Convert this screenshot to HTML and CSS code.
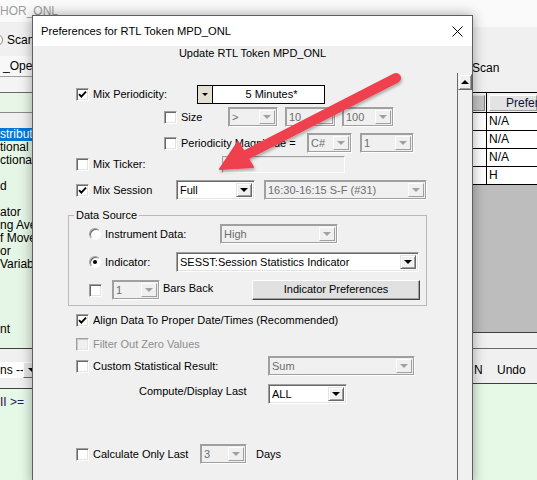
FILE: index.html
```html
<!DOCTYPE html>
<html>
<head>
<meta charset="utf-8">
<link rel="stylesheet" href="styles.css">
</head>
<body>
<div class="app">
  <div class="lp">
    <div class="lp-title">HOR_ONL</div>
    <div class="lp-tool"><span class="lp-radio"></span><span>Scan</span></div>
    <div class="lp-field">_Open_</div>
    <div class="lp-band1"></div>
    <div class="lp-band2"></div>
    <div class="lp-head"></div>
    <ul class="lp-list">
      <li class="sel">stributi</li>
      <li>tional In</li>
      <li>ctional</li>
      <li></li>
      <li>d</li>
      <li></li>
      <li>ator</li>
      <li>ng Ave</li>
      <li>f Mover</li>
      <li>or</li>
      <li>Variable</li>
      <li></li>
      <li></li>
      <li></li>
      <li></li>
      <li>nt</li>
    </ul>
    <div class="lp-bar"><div class="lp-combo"><span class="lp-ct">ns --</span><span class="lp-btn"><i class="tri"></i></span></div></div>
    <div class="lp-edit"><span class="kw">II</span> &gt;=</div>
  </div>
  <div class="rp">
    <div class="rp-top"></div>
    <div class="rp-tool">Scan</div>
    <div class="grid">
      <div class="g-row g-head"><div class="g-cell"><span class="hbtn dark"></span></div><div class="g-cell"><span class="hbtn">Prefere</span></div></div>
      <div class="g-row"><div class="g-cell"></div><div class="g-cell">N/A</div></div>
      <div class="g-row"><div class="g-cell"></div><div class="g-cell">N/A</div></div>
      <div class="g-row"><div class="g-cell"></div><div class="g-cell">N/A</div></div>
      <div class="g-row"><div class="g-cell"></div><div class="g-cell">H</div></div>
    </div>
    <div class="rp-gray"></div>
    <div class="rp-band"></div>
    <div class="rp-tool2"><span class="t-n">N</span><span>Undo</span></div>
    <div class="rp-green"></div>
  </div>
</div>

<div class="dlg">
  <div class="dlg-title">
    <span>Preferences for RTL Token MPD_ONL</span>
    <svg class="close" width="11" height="11" viewBox="0 0 11 11"><path d="M0.5 0.5 L10.5 10.5 M10.5 0.5 L0.5 10.5" stroke="#000" stroke-width="1" fill="none"/></svg>
  </div>
  <div class="dlg-sub">Update RTL Token MPD_ONL</div>
  <div class="dlg-panel">
    <div class="dlg-content">
      <div class="row r1 pl-main">
        <span class="cb"><svg width="9" height="9" viewBox="0 0 9 9"><path d="M1 4.2 L3.3 6.6 L8 1.6" stroke="#000" stroke-width="1.9" fill="none"/></svg></span>
        <span class="lbl w-period">Mix Periodicity:</span>
        <span class="pcombo"><span class="pbtn"><i class="tri sm"></i></span><span class="pfield">5 Minutes*</span></span>
      </div>
      <div class="row r2 pl-sub">
        <span class="cb"></span>
        <span class="lbl w-size">Size</span>
        <span class="combo dis c-gt"><span class="ct">&gt;</span><span class="cbtn"><i class="tri"></i></span></span>
        <span class="combo dis c-10"><span class="ct">10</span><span class="cbtn"><i class="tri"></i></span></span>
        <span class="combo dis c-100"><span class="ct">100</span><span class="cbtn"><i class="tri"></i></span></span>
      </div>
      <div class="row r3 pl-sub">
        <span class="cb"></span>
        <span class="lbl w-mag">Periodicity Magnitude =</span>
        <span class="combo dis c-cs"><span class="ct">C#</span><span class="cbtn"><i class="tri"></i></span></span>
        <span class="combo dis c-one"><span class="ct">1</span><span class="cbtn"><i class="tri"></i></span></span>
      </div>
      <div class="row r4 pl-main">
        <span class="cb"></span>
        <span class="lbl w-ticker">Mix Ticker:</span>
        <span class="tfield"></span>
      </div>
      <div class="row r5 pl-main">
        <span class="cb"><svg width="9" height="9" viewBox="0 0 9 9"><path d="M1 4.2 L3.3 6.6 L8 1.6" stroke="#000" stroke-width="1.9" fill="none"/></svg></span>
        <span class="lbl w-session">Mix Session</span>
        <span class="combo c-full"><span class="ct">Full</span><span class="cbtn"><i class="tri"></i></span></span>
        <span class="combo dis c-sess"><span class="ct">16:30-16:15 S-F (#31)</span><span class="cbtn"><i class="tri"></i></span></span>
      </div>
      <fieldset class="group">
        <legend>Data Source</legend>
        <div class="row f1">
          <span class="rb"></span>
          <span class="lbl w-inst">Instrument Data:</span>
          <span class="combo dis c-high"><span class="ct">High</span><span class="cbtn"><i class="tri"></i></span></span>
        </div>
        <div class="row f2">
          <span class="rb on"></span>
          <span class="lbl w-ind">Indicator:</span>
          <span class="combo c-sesst"><span class="ct">SESST:Session Statistics Indicator</span><span class="cbtn"><i class="tri"></i></span></span>
        </div>
        <div class="row f3">
          <span class="cb"></span>
          <span class="combo dis c-bars"><span class="ct">1</span><span class="cbtn"><i class="tri"></i></span></span>
          <span class="lbl w-bars raised">Bars Back</span>
          <span class="btn">Indicator Preferences</span>
        </div>
      </fieldset>
      <div class="row r6 pl-main">
        <span class="cb"><svg width="9" height="9" viewBox="0 0 9 9"><path d="M1 4.2 L3.3 6.6 L8 1.6" stroke="#000" stroke-width="1.9" fill="none"/></svg></span>
        <span class="lbl">Align Data To Proper Date/Times (Recommended)</span>
      </div>
      <div class="row r7 pl-main">
        <span class="cb dis"></span>
        <span class="lbl gray">Filter Out Zero Values</span>
      </div>
      <div class="row r8 pl-main">
        <span class="cb"></span>
        <span class="lbl w-custom">Custom Statistical Result:</span>
        <span class="combo dis c-sum"><span class="ct">Sum</span><span class="cbtn"><i class="tri"></i></span></span>
      </div>
      <div class="row r9 pl-compute">
        <span class="lbl w-compute raised2">Compute/Display Last</span>
        <span class="combo c-all"><span class="ct">ALL</span><span class="cbtn"><i class="tri"></i></span></span>
      </div>
      <div class="row r10 pl-main">
        <span class="cb"></span>
        <span class="lbl w-calc">Calculate Only Last</span>
        <span class="combo dis c-three"><span class="ct">3</span><span class="cbtn"><i class="tri"></i></span></span>
        <span class="lbl days">Days</span>
      </div>
    </div>
    <div class="vscroll"><div class="sb-btn"><i class="tri-up"></i></div></div>
  </div>
</div>

<svg class="callout" width="537" height="480" viewBox="0 0 537 480">
  <defs>
    <filter id="sh" x="-10%" y="-10%" width="130%" height="140%">
      <feDropShadow dx="1" dy="2" stdDeviation="1.5" flood-color="#000" flood-opacity="0.3"/>
    </filter>
  </defs>
  <g filter="url(#sh)" fill="#ee3f4e" stroke="#ee3f4e">
    <line x1="396" y1="78" x2="242" y2="157" stroke-width="10" stroke-linecap="round"/>
    <polygon points="220,169 238,142 253,167" stroke-width="2" stroke-linejoin="round"/>
  </g>
</svg>
</body>
</html>
```
FILE: styles.css
```css
* { box-sizing: border-box; margin: 0; padding: 0; }
html, body { width: 537px; height: 480px; overflow: hidden; }
body {
  position: relative;
  font-family: "Liberation Sans", Arial, sans-serif;
  font-size: 11px;
  color: #000;
  background: #f0f0f0;
}

/* ---------- background application ---------- */
.app { display: grid; grid-template-columns: 440px 97px; height: 480px; }
.lp { display: flex; flex-direction: column; overflow: hidden; font-size: 12px; }
.lp-title { height: 22px; flex: none; background: #fafafa; color: #9c9c9c; line-height: 22px; white-space: nowrap; }
.lp-tool { height: 34px; flex: none; background: #f0f0f0; display: flex; align-items: center; gap: 4px; padding-top: 2px; }
.lp-radio { width: 12px; height: 12px; margin-left: -9px; border-radius: 50%; background: #fff; border: 1px solid #8a8a8a; }
.lp-field { height: 21px; flex: none; background: #f8f8f8; border-bottom: 1px solid #a0a0a0; line-height: 20px; padding-left: 3px; }
.lp-band1 { height: 16px; flex: none; background: #f4f4f4; border-bottom: 1px solid #6a6a6a; }
.lp-band2 { height: 20px; flex: none; background: #e8f6e8; border-bottom: 1px solid #8a8a8a; }
.lp-head { height: 15px; flex: none; background: #f0f0f0; }
.lp-list { height: 221px; flex: none; list-style: none; background: #e6f6e6; border-bottom: 1px solid #404040; }
.lp-list li { height: 13px; line-height: 13px; white-space: nowrap; }
.lp-list li.sel { background: #0078d7; color: #fff; }
.lp-bar { height: 40px; flex: none; background: #f0f0f0; border-bottom: 1px solid #404040; padding-top: 13px; }
.lp-combo { display: flex; height: 16px; width: 40px; background: #fff; }
.lp-ct { width: 23px; line-height: 16px; white-space: nowrap; }
.lp-btn { width: 17px; background: #e6e6e6; border: 1px solid; border-color: #fff #696969 #696969 #fff; display: flex; align-items: center; justify-content: center; }
.lp-edit { flex: 1; background: #e6f8e6; padding-top: 6px; line-height: 14px; color: #1c1c5c; white-space: nowrap; }
.lp-edit .kw { color: #2a0a5a; }

.rp { display: flex; flex-direction: column; font-size: 12px; }
.rp-top { height: 27px; flex: none; background: #fafafa; }
.rp-tool { height: 65px; flex: none; background: #f0f0f0; padding: 34px 0 0 32px; line-height: 14px; }
.grid { border-top: 1px solid #000; background: #fff; flex: none; }
.g-row { display: grid; grid-template-columns: 46px 1fr; height: 18px; border-bottom: 1px solid #000; }
.g-row.g-head { height: 20px; background: #f0f0f0; }
.g-cell { line-height: 17px; padding-left: 2px; white-space: nowrap; overflow: hidden; }
.g-cell + .g-cell { border-left: 1px solid #000; }
.g-head .g-cell { padding: 2px 0 1px 2px; }
.hbtn { display: block; height: 16px; line-height: 15px; background: #e3e3e3; border: 1px solid; border-color: #fff #a0a0a0 #a0a0a0 #fff; padding-left: 16px; color: #10103a; }
.hbtn.dark { background: #c4c4c4; border-color: #e0e0e0 #808080 #808080 #e0e0e0; margin-right: 1px; }
.rp-gray { height: 148px; flex: none; background: #bdbdbd; border-bottom: 1px solid #404040; }
.rp-band { height: 16px; flex: none; background: #f0f0f0; border-bottom: 1px solid #696969; }
.rp-tool2 { height: 35px; flex: none; background: #f0f0f0; border-bottom: 1px solid #404040; padding: 14px 0 0 34px; line-height: 14px; display: flex; }
.rp-tool2 .t-n { width: 23px; }
.rp-green { flex: 1; background: #e6f9e6; }

/* ---------- dialog ---------- */
.dlg {
  position: absolute; left: 32px; top: 15px; width: 441px; height: 470px;
  border: 1px solid #5f5f5f; background: #f0f0f0;
  box-shadow: 0 0 12px rgba(0,0,0,0.35);
  display: flex; flex-direction: column;
}
.dlg-title { height: 30px; flex: none; background: #fff; display: flex; align-items: center; justify-content: space-between; padding: 0 9px 0 8px; font-size: 11.2px; }
.dlg-sub { height: 27px; flex: none; text-align: center; line-height: 14px; }
.dlg-panel { flex: 1; display: grid; grid-template-columns: 424px 15px; }
.dlg-content { display: flex; flex-direction: column; }
.vscroll { border-left: 1px solid #6a6a6a; background: #f0f0f0; padding-top: 1px; }
.sb-btn { height: 16px; background: #f0f0f0; border: 1px solid; border-color: #f0f0f0 #696969 #696969 #f0f0f0; box-shadow: inset 1px 1px 0 #fff, inset -1px -1px 0 #a0a0a0; display: flex; align-items: center; justify-content: center; }
.tri-up { width: 0; height: 0; border-left: 4px solid transparent; border-right: 4px solid transparent; border-bottom: 4px solid #000; }

.row { display: flex; align-items: center; white-space: nowrap; flex: none; }
.pl-main { padding-left: 43px; }
.pl-sub { padding-left: 131px; }
.pl-compute { padding-left: 106px; }
.r1 { height: 20px; margin-top: 11px; }
.r2 { height: 20px; margin-top: 3px; }
.r3 { height: 20px; margin-top: 6px; }
.r4 { height: 18px; margin-top: 2px; }
.r5 { height: 20px; margin-top: 7px; }
.r6 { height: 18px; margin-top: 5px; }
.r7 { height: 18px; margin-top: 6px; }
.r8 { height: 20px; margin-top: 3px; }
.r9 { height: 20px; margin-top: 8px; }
.r10 { height: 20px; margin-top: 40px; }

.lbl { display: inline-block; margin-left: 4px; flex: none; }
.lbl.gray { color: #8d8d8d; }
.raised { margin-bottom: 4px; }
.raised2 { margin-bottom: 6px; }
.w-period { width: 104px; }
.w-size { width: 47px; }
.w-mag { width: 126px; }
.w-ticker { width: 129px; }
.w-session { width: 83px; }
.w-inst { width: 115px; }
.w-ind { width: 71px; }
.w-bars { width: 89px; margin-left: 3px; }
.w-custom { width: 175px; }
.w-compute { width: 129px; margin-left: 0; }
.w-calc { width: 107px; }
.days { margin-left: 9px; }

/* checkbox */
.cb {
  width: 13px; height: 13px; flex: none; background: #fff;
  border: 1px solid; border-color: #a0a0a0 #fff #fff #a0a0a0;
  box-shadow: inset 1px 1px 0 #696969, inset -1px -1px 0 #e3e3e3;
  display: flex; align-items: center; justify-content: center;
}
.cb.dis { background: #f0f0f0; box-shadow: inset 1px 1px 0 #c8c8c8, inset -1px -1px 0 #e3e3e3; }

/* radio */
.rb {
  width: 12px; height: 12px; flex: none; border-radius: 50%; background: #fff;
  border: 1px solid; border-color: #a0a0a0 #fff #fff #a0a0a0;
  box-shadow: inset 1px 1px 0 #696969;
  display: flex; align-items: center; justify-content: center;
}
.rb.on::after { content: ""; width: 4px; height: 4px; border-radius: 50%; background: #000; }

/* combos */
.combo {
  display: flex; align-items: stretch; height: 20px; flex: none; background: #fff;
  border: 1px solid; border-color: #a0a0a0 #fff #fff #a0a0a0;
  box-shadow: inset 1px 1px 0 #696969, inset -1px -1px 0 #e3e3e3;
  padding: 2px;
}
.combo .ct { flex: 1; padding-left: 1px; line-height: 14px; overflow: hidden; }
.combo .cbtn {
  width: 16px; flex: none; background: #f0f0f0;
  border: 1px solid; border-color: #e3e3e3 #696969 #696969 #e3e3e3;
  box-shadow: inset 1px 1px 0 #fff, inset -1px -1px 0 #a0a0a0;
  display: flex; align-items: center; justify-content: center;
}
.combo.dis { background: #f0f0f0; color: #6d6d6d; box-shadow: inset 1px 1px 0 #a0a0a0, inset -1px -1px 0 #a0a0a0; }
.combo.dis .cbtn { border-color: #fff #a0a0a0 #a0a0a0 #fff; box-shadow: none; }
.tri { width: 0; height: 0; border-left: 4px solid transparent; border-right: 4px solid transparent; border-top: 4px solid #000; }
.tri.sm { border-left-width: 3px; border-right-width: 3px; border-top-width: 3px; }
.combo.dis .tri { border-top-color: #a0a0a0; }

.c-gt { width: 50px; }
.c-10 { width: 51px; margin-left: 7px; }
.c-100 { width: 52px; margin-left: 6px; }
.c-cs { width: 45px; }
.c-one { width: 54px; margin-left: 8px; }
.c-full { width: 79px; }
.c-sess { width: 163px; margin-left: 9px; }
.c-high { width: 118px; }
.c-sesst { width: 243px; }
.c-bars { width: 48px; margin-left: 10px; }
.c-sum { width: 147px; }
.c-all { width: 79px; }
.c-three { width: 47px; }

/* periodicity selector */
.pcombo { display: flex; height: 19px; width: 128px; border: 1px solid #000; flex: none; }
.pbtn { width: 15px; background: #e3dfd2; border-right: 1px solid #000; display: flex; align-items: center; justify-content: center; }
.pfield { flex: 1; background: #fff; text-align: center; line-height: 17px; padding-left: 6px; }

.tfield {
  width: 123px; height: 17px; flex: none; background: #f0f0f0;
  border: 1px solid; border-color: #a0a0a0 #fff #fff #a0a0a0;
  box-shadow: inset 1px 1px 0 #e3e3e3;
}

/* group box */
.group {
  margin: 8px 0 0 35px; width: 359px; flex: none;
  border: 1px solid #b8b8b8; padding: 2px 0 5px 0;
}
.group legend { margin-left: 5px; padding: 0 2px; line-height: 14px; }
.f1 { height: 20px; padding-left: 20px; }
.f2 { height: 20px; padding-left: 20px; margin-top: 8px; }
.f3 { height: 20px; padding-left: 20px; margin-top: 8px; }

.btn {
  width: 168px; height: 20px; flex: none; text-align: center; line-height: 17px;
  background: #e1e1e1; border: 1px solid; border-color: #fff #404040 #404040 #fff;
  box-shadow: inset -1px -1px 0 #a0a0a0;
}

/* callout arrow */
.callout { position: absolute; left: 0; top: 0; pointer-events: none; }
```
